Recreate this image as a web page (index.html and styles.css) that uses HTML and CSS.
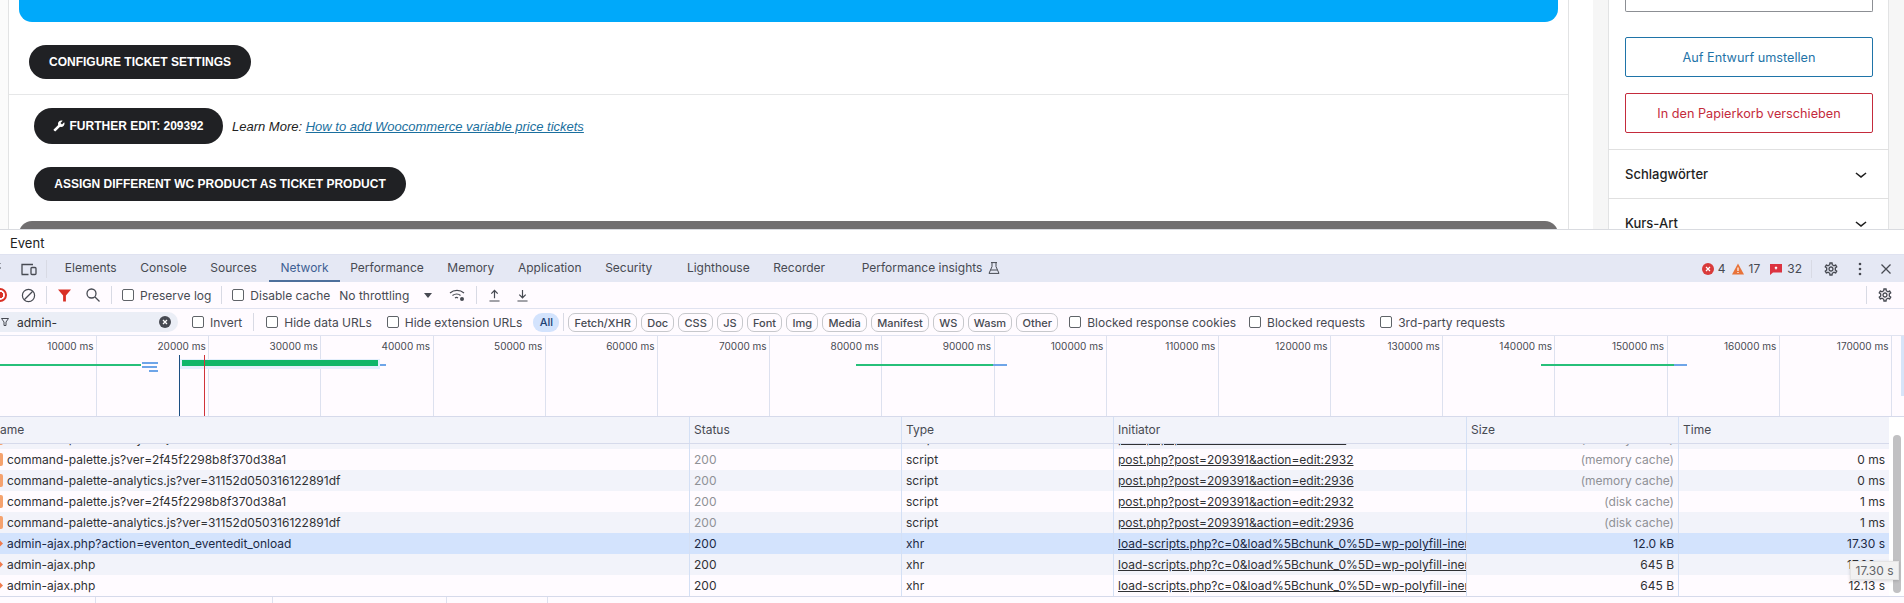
FILE: index.html
```html
<!DOCTYPE html>
<html>
<head>
    <meta charset="utf-8">
    <title>Event bearbeiten</title>
    <link rel="stylesheet" href="styles.css">
</head>

<body>

<svg class="defs" width="0" height="0">
	<symbol id="gear" viewBox="0 0 24 24"><path d="M19.43 12.98c.04-.32.07-.64.07-.98 0-.34-.03-.66-.07-.98l2.11-1.65c.19-.15.24-.42.12-.64l-2-3.46c-.09-.16-.26-.25-.44-.25-.06 0-.12.01-.17.03l-2.49 1c-.52-.4-1.08-.73-1.69-.98l-.38-2.65C14.46 2.18 14.25 2 14 2h-4c-.25 0-.46.18-.49.42l-.38 2.65c-.61.25-1.17.59-1.69.98l-2.49-1c-.06-.02-.12-.03-.18-.03-.17 0-.34.09-.43.25l-2 3.46c-.13.22-.07.49.12.64l2.11 1.65c-.04.32-.07.65-.07.98 0 .33.03.66.07.98l-2.11 1.65c-.19.15-.24.42-.12.64l2 3.46c.09.16.26.25.44.25.06 0 .12-.01.17-.03l2.49-1c.52.4 1.08.73 1.69.98l.38 2.65c.03.24.24.42.49.42h4c.25 0 .46-.18.49-.42l.38-2.65c.61-.25 1.17-.59 1.69-.98l2.49 1c.06.02.12.03.18.03.17 0 .34-.09.43-.25l2-3.46c.12-.22.07-.49-.12-.64l-2.11-1.65zm-1.98-1.71c.04.31.05.52.05.73 0 .21-.02.43-.05.73l-.14 1.13.89.7 1.08.84-.7 1.21-1.27-.51-1.04-.42-.9.68c-.43.32-.84.56-1.25.73l-1.06.43-.16 1.13-.2 1.35h-1.4l-.19-1.35-.16-1.13-1.06-.43c-.43-.18-.83-.41-1.23-.71l-.91-.7-1.06.43-1.27.51-.7-1.21 1.08-.84.89-.7-.14-1.13c-.03-.31-.05-.54-.05-.74s.02-.43.05-.73l.14-1.13-.89-.7-1.08-.84.7-1.21 1.27.51 1.04.42.9-.68c.43-.32.84-.56 1.25-.73l1.06-.43.16-1.13.2-1.35h1.39l.19 1.35.16 1.13 1.06.43c.43.18.83.41 1.23.71l.91.7 1.06-.43 1.27-.51.7 1.21-1.07.85-.89.7.14 1.13zM12 8c-2.21 0-4 1.79-4 4s1.79 4 4 4 4-1.79 4-4-1.79-4-4-4zm0 6c-1.1 0-2-.9-2-2s.9-2 2-2 2 .9 2 2-.9 2-2 2z"/></symbol>
</svg>

<!-- wordpress page -->
<div class="site">
	<div class="main">
		<div class="box">
			<div class="blue-bar"></div>
			<div class="part-one">
				<a class="btn btn-config">CONFIGURE TICKET SETTINGS</a>
			</div>
			<div class="part-two">
				<div class="edit-row">
					<a class="btn btn-edit">
						<svg class="wrench" viewBox="0 0 24 24"><path d="M22.7 19l-9.1-9.1c.9-2.3.4-5-1.5-6.9-2-2-5-2.4-7.4-1.3L9 6 6 9 1.6 4.7C.4 7.1.9 10.1 2.9 12.1c1.9 1.9 4.6 2.4 6.9 1.5l9.1 9.1c.4.4 1 .4 1.4 0l2.3-2.3c.5-.4.5-1.1.1-1.4z"/></svg>
						FURTHER EDIT: 209392
					</a>
					<span class="learn">Learn More: <a>How to add Woocommerce variable price tickets</a></span>
				</div>
				<a class="btn btn-assign">ASSIGN DIFFERENT WC PRODUCT AS TICKET PRODUCT</a>
				<div class="gray-bar"></div>
			</div>
		</div>
	</div>
	<div class="side">
		<div class="gutter"></div>
		<div class="panel">
			<div class="panel-top">
				<div class="field"></div>
				<a class="side-btn draft">Auf Entwurf umstellen</a>
				<a class="side-btn trash">In den Papierkorb verschieben</a>
			</div>
			<div class="panel-row"><span>Schlagwörter</span><svg viewBox="0 0 24 24"><path d="M17.5 11.6L12 16l-5.5-4.4.9-1.2L12 14l4.6-3.6z"/></svg></div>
			<div class="panel-row"><span>Kurs-Art</span><svg viewBox="0 0 24 24"><path d="M17.5 11.6L12 16l-5.5-4.4.9-1.2L12 14l4.6-3.6z"/></svg></div>
		</div>
	</div>
</div>

<!-- devtools -->
<div class="devtools">
	<div class="event-bar">Event</div>

	<div class="tabs">
		<svg class="ic-inspect" viewBox="0 0 16 16"><path d="M-3 2h2M3 2h2M7 2h1v1M8 6v2M-3 11h3v1h-3z"/><path class="solid" d="M0 7l8 3-3 1.4L8 15l-1.200 1-3.200-3.600L2 15z"/></svg>
		<svg class="ic-device" viewBox="0 0 16 14"><path d="M1 12V2.500h11M.5 12.500h7"/><rect x="10" y="5.500" width="5" height="7" rx="1"/></svg>
		<i class="sep sep-tabs"></i>
		<a class="tab">Elements</a>
		<a class="tab">Console</a>
		<a class="tab">Sources</a>
		<a class="tab active">Network</a>
		<a class="tab">Performance</a>
		<a class="tab">Memory</a>
		<a class="tab">Application</a>
		<a class="tab wide">Security</a>
		<a class="tab">Lighthouse</a>
		<a class="tab wide rec">Recorder</a>
		<a class="tab">Performance insights
			<svg class="ic-flask" viewBox="0 0 12 12"><path d="M3 .6h6M4 .6v4L1 11.400h10L8 4.600V.6M2.800 8h6.400"/></svg>
		</a>
		<div class="counts">
			<svg class="ic-count" viewBox="0 0 12 12"><circle class="f-red" cx="6" cy="6" r="6"/><path class="x" d="M4 4l4 4M8 4l-4 4"/></svg><span class="n-one">4</span>
			<svg class="ic-count warn" viewBox="0 0 12 12"><path class="f-orange" d="M6 .5l6 11H0z"/><path class="x" d="M6 4.500v3.500M6 9v1"/></svg><span>17</span>
			<svg class="ic-count msg" viewBox="0 0 12 12"><path class="f-red2" d="M0 1h12v8.500H3L0 12z"/><path class="x" d="M5 4l2 2M7 4l-2 2"/></svg><span>32</span>
			<i class="sep sep-counts"></i>
			<svg class="ic-gear"><use href="#gear"/></svg>
			<svg class="ic-dots" viewBox="0 0 4 14"><circle cx="2" cy="2" r="1.300"/><circle cx="2" cy="7" r="1.300"/><circle cx="2" cy="12" r="1.300"/></svg>
			<svg class="ic-close" viewBox="0 0 10 10"><path d="M.5.5l9 9M9.500.5l-9 9"/></svg>
		</div>
	</div>

	<div class="toolbar">
		<span class="record"></span>
		<svg class="ic-clear" viewBox="0 0 16 16"><circle cx="8" cy="8" r="6.500"/><path d="M3.500 12.500l9-9"/></svg>
		<i class="sep sep-a"></i>
		<svg class="ic-filter" viewBox="0 0 14 14"><path d="M0 .5h14L8.500 7v6.500h-3V7z"/></svg>
		<svg class="ic-search" viewBox="0 0 14 14"><circle cx="5.500" cy="5.500" r="4.500"/><path d="M9 9l4.500 4.500"/></svg>
		<i class="sep sep-b"></i>
		<label class="check"><i></i>Preserve log</label>
		<i class="sep sep-c"></i>
		<label class="check"><i></i>Disable cache</label>
		<span class="throttle">No throttling</span>
		<span class="arrow"></span>
		<svg class="ic-wifi" viewBox="0 0 16 12"><path d="M1 3.500c4-3.500 10-3.500 14 0M3.500 6c2.500-2 6-2 8 0M6 8.500c1-.7 2-.7 3 0"/><circle class="solid" cx="13" cy="9.500" r="2"/></svg>
		<i class="sep sep-d"></i>
		<svg class="ic-load" viewBox="0 0 12 14"><path d="M6 10V1.500M2.500 5L6 1.500 9.500 5M.5 13h11"/></svg>
		<svg class="ic-load down" viewBox="0 0 12 14"><path d="M6 1v8.500M2.500 6L6 9.500 9.500 6M.5 13h11"/></svg>
		<i class="sep sep-e"></i>
		<svg class="ic-gear ic-gear-bar"><use href="#gear"/></svg>
	</div>

	<div class="filters">
		<div class="search">
			<svg class="ic-funnel" viewBox="0 0 8 8"><path d="M.5.5h7L5 4v3.500H3V4z"/></svg>
			<span>admin-</span>
			<svg class="ic-clear-input" viewBox="0 0 12 12"><circle cx="6" cy="6" r="6"/><path d="M4 4l4 4M8 4l-4 4"/></svg>
		</div>
		<label class="check invert"><i></i>Invert</label>
		<i class="sep sep-f"></i>
		<label class="check urls"><i></i>Hide data URLs</label>
		<label class="check ext"><i></i>Hide extension URLs</label>
		<span class="chip-all">All</span>
		<i class="sep sep-g"></i>
		<div class="chips">
			<span>Fetch/XHR</span><span>Doc</span><span>CSS</span><span>JS</span><span>Font</span><span>Img</span><span>Media</span><span>Manifest</span><span>WS</span><span>Wasm</span><span>Other</span>
		</div>
		<label class="check cookies"><i></i>Blocked response cookies</label>
		<label class="check blocked"><i></i>Blocked requests</label>
		<label class="check party"><i></i>3rd-party requests</label>
	</div>

	<div class="overview">
		<div class="tick">10000 ms</div>
		<div class="tick">20000 ms</div>
		<div class="tick">30000 ms</div>
		<div class="tick">40000 ms</div>
		<div class="tick">50000 ms</div>
		<div class="tick">60000 ms</div>
		<div class="tick">70000 ms</div>
		<div class="tick">80000 ms</div>
		<div class="tick">90000 ms</div>
		<div class="tick">100000 ms</div>
		<div class="tick">110000 ms</div>
		<div class="tick">120000 ms</div>
		<div class="tick">130000 ms</div>
		<div class="tick">140000 ms</div>
		<div class="tick">150000 ms</div>
		<div class="tick">160000 ms</div>
		<div class="tick">170000 ms</div>

		<div class="bar thin b1"></div>
		<div class="bar blue b2"></div>
		<div class="bar blue b3"></div>
		<div class="bar blue b4"></div>
		<div class="bar halo"></div>
		<div class="bar thick"></div>
		<div class="bar blue b5"></div>
		<div class="bar thin b6"></div>
		<div class="bar blue b7"></div>
		<div class="bar thin b8"></div>
		<div class="bar blue b9"></div>
		<div class="mark dom"></div>
		<div class="mark load"></div>
		<div class="handle"></div>
	</div>

	<div class="net">
		<div class="table">
			<div class="row head">
				<div><span class="name-clip">Name</span></div>
				<div>Status</div>
				<div>Type</div>
				<div>Initiator</div>
				<div>Size</div>
				<div>Time</div>
			</div>
			<div class="rows">
				<div class="row alt first">
					<div><i class="type js"></i>command-palette-analytics.js?ver=31152d050316122891df</div>
					<div class="dim">200</div>
					<div>script</div>
					<div><a>post.php?post=209391&amp;action=edit:293</a></div>
					<div class="num dim">(memory cache)</div>
					<div class="num">0 ms</div>
				</div>
				<div class="row">
					<div><i class="type js"></i>command-palette.js?ver=2f45f2298b8f370d38a1</div>
					<div class="dim">200</div>
					<div>script</div>
					<div><a>post.php?post=209391&amp;action=edit:2932</a></div>
					<div class="num dim">(memory cache)</div>
					<div class="num">0 ms</div>
				</div>
				<div class="row alt">
					<div><i class="type js"></i>command-palette-analytics.js?ver=31152d050316122891df</div>
					<div class="dim">200</div>
					<div>script</div>
					<div><a>post.php?post=209391&amp;action=edit:2936</a></div>
					<div class="num dim">(memory cache)</div>
					<div class="num">0 ms</div>
				</div>
				<div class="row">
					<div><i class="type js"></i>command-palette.js?ver=2f45f2298b8f370d38a1</div>
					<div class="dim">200</div>
					<div>script</div>
					<div><a>post.php?post=209391&amp;action=edit:2932</a></div>
					<div class="num dim">(disk cache)</div>
					<div class="num">1 ms</div>
				</div>
				<div class="row alt">
					<div><i class="type js"></i>command-palette-analytics.js?ver=31152d050316122891df</div>
					<div class="dim">200</div>
					<div>script</div>
					<div><a>post.php?post=209391&amp;action=edit:2936</a></div>
					<div class="num dim">(disk cache)</div>
					<div class="num">1 ms</div>
				</div>
				<div class="row selected">
					<div><i class="type xhr"></i>admin-ajax.php?action=eventon_eventedit_onload</div>
					<div>200</div>
					<div>xhr</div>
					<div><a>load-scripts.php?c=0&amp;load%5Bchunk_0%5D=wp-polyfill-inert,regenerator-runtime</a></div>
					<div class="num">12.0 kB</div>
					<div class="num">17.30 s</div>
				</div>
				<div class="row alt">
					<div><i class="type xhr"></i>admin-ajax.php</div>
					<div>200</div>
					<div>xhr</div>
					<div><a>load-scripts.php?c=0&amp;load%5Bchunk_0%5D=wp-polyfill-inert,regenerator-runtime</a></div>
					<div class="num">645 B</div>
					<div class="num">17.30 s</div>
				</div>
				<div class="row">
					<div><i class="type xhr"></i>admin-ajax.php</div>
					<div>200</div>
					<div>xhr</div>
					<div><a>load-scripts.php?c=0&amp;load%5Bchunk_0%5D=wp-polyfill-inert,regenerator-runtime</a></div>
					<div class="num">645 B</div>
					<div class="num">12.13 s</div>
				</div>
			</div>
		</div>
		<div class="scrollbar"><div class="thumb"></div></div>
		<div class="tooltip">17.30 s</div>
	</div>

	<div class="status">
		<i></i><i></i><i></i><i></i>
	</div>
</div>

</body>
</html>
```

FILE: styles.css
```css
*{ margin:0; padding:0; box-sizing:border-box;}
html,body{ height:603px; overflow:hidden;}
body{ background:#fff; font-family:"Inter","Noto Sans",sans-serif; font-size:12px; color:#303134;}
a{ text-decoration:none;}
i{ font-style:normal;}
.defs{ display:block; height:0;}

/* wordpress page */
.site{ display:flex; height:229px; overflow:hidden; background:#fff;}
.main{ flex:0 0 1569px; padding-left:8px; background:#fbfbfb;}
.box{ height:229px; overflow:hidden; background:#fff; border-left:1px solid #e2e3e4; border-right:1px solid #e2e3e4;}
.blue-bar{ height:22px; margin:0 10px; background:#00a9fa; border-radius:0 0 13px 13px;}
.part-one{ padding:23px 0 15px 20px; border-bottom:1px solid #e6e7e8;}
.part-two{ padding:13px 0 0 25px;}
.btn{ display:flex; align-items:center; justify-content:center; height:34px; border-radius:17px; background:#202124; color:#fff; font:bold 12px "Liberation Sans",Arial,sans-serif;}
.btn-config{ width:222px;}
.btn-edit{ width:189px; height:36px; border-radius:18px; gap:4px;}
.btn-assign{ width:372px; margin-top:23px;}
.wrench{ width:12px; height:12px; fill:#fff; transform:scaleX(-1);}
.edit-row{ display:flex; align-items:center; gap:9px;}
.learn{ font:italic 13px "Liberation Sans",Arial,sans-serif; color:#222;}
.learn a{ color:#1a6f9e; text-decoration:underline;}
.gray-bar{ height:20px; margin:20px 10px 0 -15px; background:#716f70; border-radius:13px 13px 0 0;}

.side{ flex:1; display:flex; background:#fff;}
.gutter{ flex:0 0 24px;}
.panel{ flex:0 0 311px; border-left:15px solid #f6f6f6; border-right:15px solid #f6f6f6; background:#fff; box-shadow:inset 1px 0 0 #e2e3e4,inset -1px 0 0 #e2e3e4;}
.panel-top{ padding:0 16px 16px 17px; border-bottom:1px solid #e0e0e0;}
.field{ height:12px; border:1px solid #8c8f94; border-top:0; border-radius:0 0 2px 2px; margin-bottom:25px;}
.side-btn{ display:flex; align-items:center; justify-content:center; height:40px; border:1px solid; border-radius:2px; font-size:12.700px; background:#fff;}
.draft{ border-color:#1f74a8; color:#1f74a8; margin-bottom:16px;}
.trash{ border-color:#c42b3c; color:#c42b3c;}
.panel-row{ display:flex; align-items:center; justify-content:space-between; height:49px; padding:0 16px 0 17px; border-bottom:1px solid #e0e0e0; font-size:13px; font-weight:500; color:#1e1e1e;}
.panel-row svg{ width:24px; height:24px; fill:#1e1e1e;}

/* devtools */
.devtools{ height:374px; background:#fffbff; border-top:1px solid #d9dbe0;}
.event-bar{ height:24px; padding-left:10px; background:#fff; font-size:13px; line-height:26px; color:#222;}
.sep{ display:block; flex:none; width:1px; height:18px; background:#d8dae4;}

.tabs{ display:flex; align-items:center; height:28px; background:#e5e8f4; color:#474a52; font-size:12px; border-top:1px solid #dfe2f0;}
.tabs svg,.toolbar svg,.filters svg{ flex:none;}
.tab{ display:flex; align-items:center; height:100%; padding:0 11.8px 2px; white-space:nowrap;}
.tab.wide{ padding-right:22.800px;}
.tab.rec{ padding-right:24.800px;}
.tab.active{ color:#3f5f93; border-bottom:2px solid #4d709c; padding-bottom:0; margin-right:-2px;}
.sep-tabs{ margin-right:6px;}
.ic-inspect{ width:16px; height:16px; margin-left:-8px; fill:none; stroke:#474a52;}
.ic-inspect .solid{ fill:#474a52; stroke:none;}
.ic-device{ width:16px; height:14px; margin-left:13px; margin-right:9px; fill:none; stroke:#474a52; stroke-width:1.3;}
.ic-flask{ width:12px; height:12px; margin-left:6px; fill:none; stroke:#474a52;}
.counts{ display:flex; align-items:center; margin-left:auto; height:100%;}
.counts span{ margin-left:5px;}
.counts .n-one{ margin-left:4px;}
.ic-count{ width:12px; height:12px;}
.ic-count.warn{ margin-left:6px;}
.ic-count.msg{ margin-left:10px;}
.f-red{ fill:#d93a3a;}
.f-red2{ fill:#dc3340;}
.f-orange{ fill:#e8733a;}
.x{ stroke:#fff; stroke-width:1.2; fill:none;}
.sep-counts{ margin:0 11px 0 9px;}
.ic-gear{ width:16px; height:16px; fill:#474a52;}
.ic-dots{ width:4px; height:14px; margin-left:19px; fill:#474a52;}
.ic-close{ width:10px; height:10px; margin:0 13px 0 19px; stroke:#474a52; stroke-width:1.3; fill:none;}

.toolbar{ display:flex; align-items:center; height:27px; border-bottom:1px solid #e0e3f0; font-size:12px; color:#474a52;}
.record{ flex:none; width:14px; height:14px; margin-left:-7px; border:2px solid #d93025; border-radius:50%; background:radial-gradient(#d93025 3px,#fffbff 3.500px);}
.ic-clear{ width:15px; height:15px; margin-left:14px; fill:none; stroke:#474a52; stroke-width:1.300;}
.sep-a{ margin:0 11px 0 10px;}
.ic-filter{ width:13px; height:13px; fill:#d93025;}
.ic-search{ width:14px; height:14px; margin-left:15px; fill:none; stroke:#474a52; stroke-width:1.300;}
.sep-b{ margin:0 10px 0 11px;}
.check{ display:flex; align-items:center; white-space:nowrap;}
.check i{ flex:none; width:12px; height:12px; margin-right:6px; border:1px solid #5f6368; border-radius:2px; background:#fff;}
.sep-c{ margin:0 10px 0 10px;}
.throttle{ margin-left:9px; width:85px;}
.arrow{ flex:none; width:0; height:0; border:4px solid transparent; border-top:5px solid #474a52; border-bottom:0;}
.ic-wifi{ width:16px; height:13px; margin-left:17px; fill:none; stroke:#474a52; stroke-width:1.200;}
.ic-wifi .solid{ fill:#474a52; stroke:none;}
.sep-d{ margin:0 12px 0 11px;}
.ic-load{ width:11px; height:13px; fill:none; stroke:#474a52; stroke-width:1.300;}
.ic-load.down{ margin-left:17px;}
.sep-e{ margin-left:auto;}
.ic-gear-bar{ margin:0 11px 0 10px;}

.filters{ display:flex; align-items:center; height:27px; border-bottom:1px solid #e0e3f0; font-size:12px; color:#474a52;}
.search{ flex:none; display:flex; align-items:center; width:178px; height:20px; padding-left:1px; background:#ebeef6; border-radius:0 10px 10px 0; color:#303134;}
.ic-funnel{ width:8px; height:8px; fill:none; stroke:#474a52;}
.search span{ margin-left:8px; flex:1;}
.ic-clear-input{ width:12px; height:12px; margin-right:7px;}
.ic-clear-input circle{ fill:#474a52;}
.ic-clear-input path{ stroke:#fff; stroke-width:1.300;}
.invert{ margin-left:14px;}
.sep-f{ margin:0 12px 0 11px;}
.ext{ margin-left:15px;}
.chip-all{ flex:none; width:26px; height:19px; margin-left:11px; border-radius:9px; background:#d3e3fd; color:#1d3f73; font-weight:500; font-size:11px; line-height:19px; text-align:center;}
.sep-g{ height:18px; margin:0 4px 0 4px;}
.chips{ display:flex; gap:4px;}
.chips span{ height:19px; padding:0 5.200px; border:1px solid #c7c8cc; border-radius:7px; font-size:11px; font-weight:500; line-height:18px; white-space:nowrap;}
.cookies{ margin-left:11px;}
.blocked{ margin-left:13px;}
.party{ margin-left:15px;}

.overview{ position:relative; display:flex; height:81px; border-bottom:1px solid #d6daeb; overflow:hidden; background:#fffbff;}
.tick{ flex:0 0 112.2px; padding:4px 2.5px 0 0; border-right:1px solid #dde1ef; font-size:10px; color:#474a52; text-align:right; white-space:nowrap;}
.tick:first-child{ flex-basis:97px;}
.bar{ position:absolute;}
.thin{ height:2px; background:#27c07a; top:28px;}
.blue{ height:2px; background:#6ea5e8;}
.b1{ left:0; width:141px;}
.b2{ left:142px; top:26px; width:16px;}
.b3{ left:142px; top:30px; width:15px;}
.b4{ left:149px; top:34px; width:9px;}
.halo{ left:180px; top:23px; width:200px; height:10px; background:#e4effc;}
.thick{ left:182px; top:24px; width:196px; height:6px; background:#10b668;}
.b5{ left:380px; top:28px; width:6px;}
.b6{ left:856px; width:137px;}
.b7{ left:993px; top:28px; width:14px;}
.b8{ left:1541px; width:133px;}
.b9{ left:1674px; top:28px; width:13px;}
.mark{ position:absolute; top:19px; bottom:0; width:1px;}
.dom{ left:179px; background:#1c4f82;}
.load{ left:204px; background:#d0333a;}
.handle{ position:absolute; top:0; right:0; width:3px; height:60px; background:#d7e4f8;}

.net{ position:relative; display:flex; height:180px; border-bottom:1px solid #d6daeb;}
.table{ flex:0 0 1889px; overflow:hidden;}
.row{ display:grid; grid-template-columns:689px 212px 212px 353px 212px 211px; height:21px; line-height:21px; background:#fffbff; color:#303134;}
.row>div{ padding:0 4px; overflow:hidden; white-space:nowrap; border-left:1px solid #d4e0f5;}
.row>div:first-child{ border-left:0; padding-left:7px; position:relative;}
.row.alt{ background:#f2f3fa;}
.row.selected{ background:#d3e3fd; color:#1c2a45;}
.row a{ color:inherit; text-decoration:underline;}
.row .dim{ color:#8f9196;}
.row.selected .dim{ color:inherit;}
.row .num{ text-align:right;}
.row.head{ height:27px; line-height:26px; background:#f2f3fa; border-bottom:1px solid #d6daeb; color:#474a52;}
.name-clip{ margin-left:-16px;}
.rows{ height:153px; overflow:hidden;}
.row.first{ margin-top:-16px;}
.type{ position:absolute; left:-4px; top:4px; width:7px; height:13px; background:#f5a26e; border-radius:2px;}
.type.xhr{ left:-3px; top:8px; width:5px; height:5px; border-radius:0; transform:rotate(45deg); background:#ef7a4d;}

.scrollbar{ flex:1; padding:18px 3px 3px 4px; background:#fff;}
.thumb{ height:158px; background:#c1c1c3; border-radius:4px;}
.tooltip{ position:absolute; left:1850px; top:144px; width:49px; height:19px; background:#f1f1f1; border:1px solid #e4e4e4; box-shadow:0 1px 3px rgba(0,0,0,.15); color:#5f6368; font-size:12px; line-height:17px; text-align:center; white-space:nowrap;}

.status{ display:flex; height:6px; background:#fffbff;}
.status i{ display:block; width:1px; height:6px; background:#dde1ef;}
.status i:nth-child(1){ margin-left:95px;}
.status i:nth-child(2){ margin-left:176px;}
.status i:nth-child(3){ margin-left:173px;}
.status i:nth-child(4){ margin-left:100px;}
```
